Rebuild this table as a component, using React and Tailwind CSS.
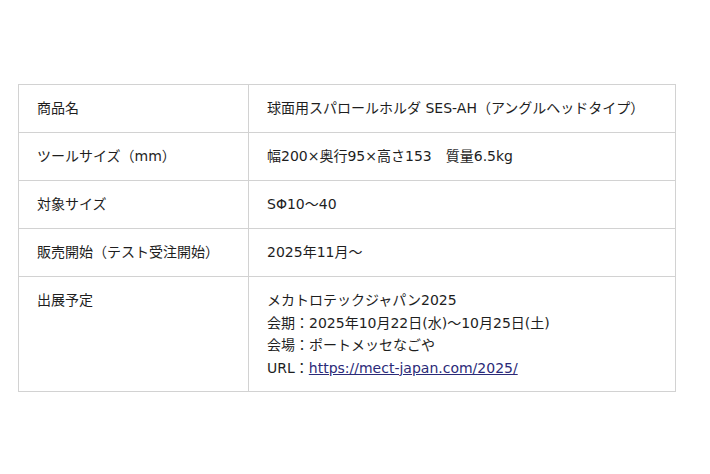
import React from "react";

const rows = [
  { label: "商品名", value: ["球面用スパロールホルダ SES-AH（アングルヘッドタイプ）"] },
  { label: "ツールサイズ（mm）", value: ["幅200×奥行95×高さ153　質量6.5kg"] },
  { label: "対象サイズ", value: ["SΦ10～40"] },
  { label: "販売開始（テスト受注開始）", value: ["2025年11月～"] },
];

const App = () => {
  return (
    <div
      lang="ja"
      className="w-[710px] h-[474px] bg-white pt-[84px] pl-[18px] text-[14px] leading-[22.4px] text-[#1e1e1e]"
      style={{ fontFamily: '"DejaVu Sans", "Noto Sans CJK JP", sans-serif' }}
    >
      <table className="w-[658px] border-collapse border border-[#e2e2e2]">
        <tbody>
          {rows.map((r) => (
            <tr key={r.label}>
              <td className="w-[230px] border border-[#d2d2d2] px-[18px] py-[12.3px] align-top">{r.label}</td>
              <td className="border border-[#d2d2d2] px-[18px] py-[12.3px] align-top">{r.value}</td>
            </tr>
          ))}
          <tr>
            <td className="w-[230px] border border-[#d2d2d2] px-[18px] py-[12.3px] align-top">出展予定</td>
            <td className="border border-[#d2d2d2] px-[18px] py-[12.3px] align-top">
              <div>メカトロテックジャパン2025</div>
              <div>会期：2025年10月22日(水)～10月25日(土)</div>
              <div>会場：ポートメッセなごや</div>
              <div>
                URL：
                <a href="#" className="text-[#2b2a78] underline">https://mect-japan.com/2025/</a>
              </div>
            </td>
          </tr>
        </tbody>
      </table>
    </div>
  );
};

export default App;
